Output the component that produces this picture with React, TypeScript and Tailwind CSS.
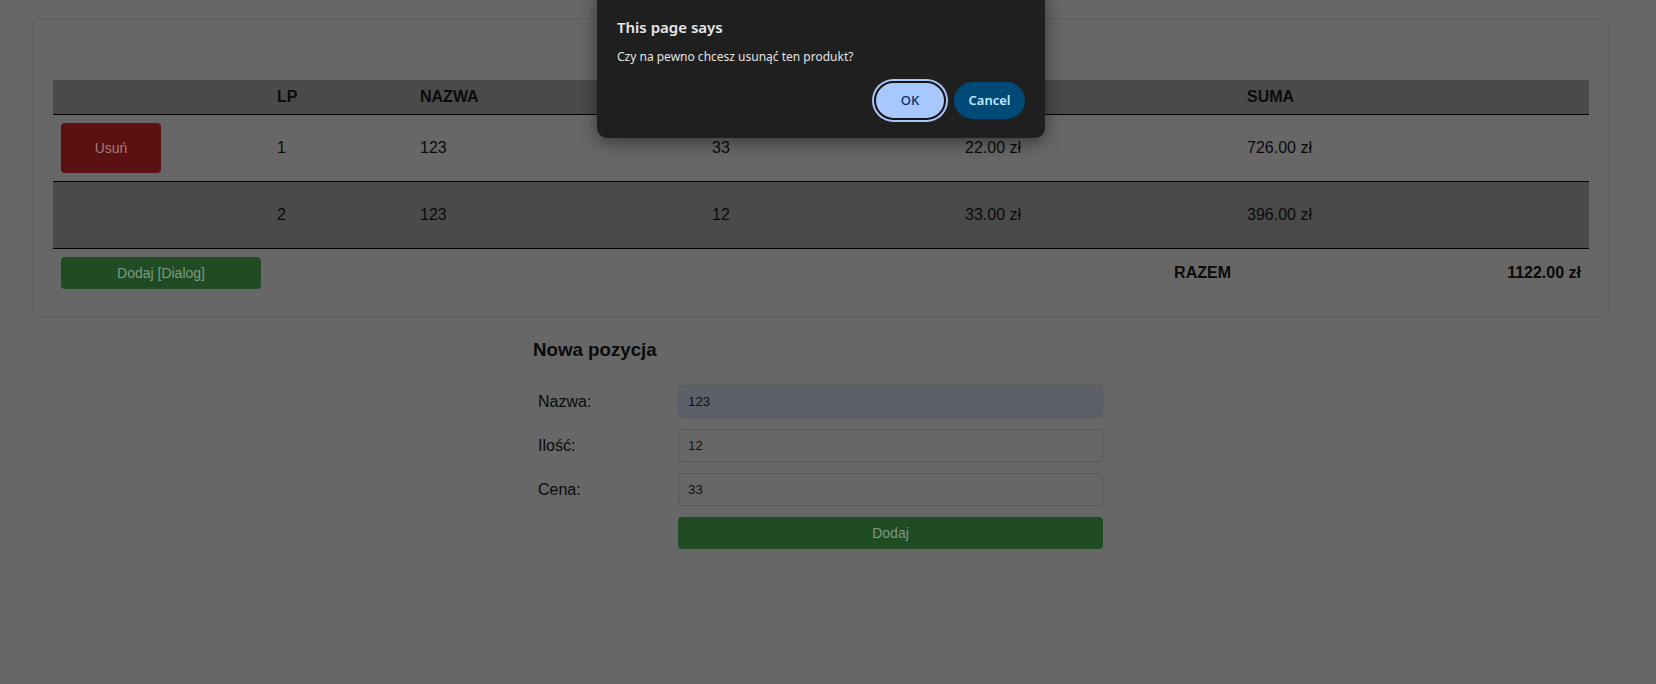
import React from "react";

type Item = {
    lp: number;
    name: string;
    qty: number;
    price: string;
    sum: string;
};

const items: Item[] = [
    { lp: 1, name: "123", qty: 33, price: "22.00 zł", sum: "726.00 zł" },
    { lp: 2, name: "123", qty: 12, price: "33.00 zł", sum: "396.00 zł" },
];

const cols = "grid grid-cols-[216px_143px_292px_253px_282px_350px]";

function ConfirmDialog() {
    return (
        <div className="absolute top-[-12px] left-[597px] w-[448px] h-[150px] rounded-[10px] bg-[#1f1f1f] shadow-[0_4px_18px_rgba(0,0,0,0.45)] px-[20px] pt-[29px] font-['Noto_Sans',sans-serif]">
            <div className="text-[15px] leading-[20px] font-semibold text-[#e8e8e8]">This page says</div>
            <div className="mt-[11px] text-[12px] leading-[18px] text-[#e3e3e3]">
                Czy na pewno chcesz usunąć ten produkt?
            </div>
            <div className="mt-[16px] flex justify-end gap-2">
                <button className="w-[72px] h-[39px] -my-[1px] rounded-full bg-[#a8c7fa] border-2 border-[#141414] shadow-[0_0_0_2px_#a8c7fa] text-[13px] font-medium text-[#062e6f]">
                    OK
                </button>
                <button className="w-[71px] h-[37px] rounded-full bg-[#004a77] text-[13px] font-semibold text-[#c2e7ff]">
                    Cancel
                </button>
            </div>
        </div>
    );
}

export default function App() {
    return (
        <div className="relative min-h-screen w-full overflow-hidden bg-[#676767] pt-[18px] font-['Liberation_Sans',Arial,sans-serif] text-[#0a0a0a]">
            {/* Cart card */}
            <div className="ml-[32px] w-[1577px] rounded-lg border border-[#5d5d5d] px-[20px] pt-[61px] pb-[20px]">
                <div className="w-[1536px]">
                    <div className={`${cols} h-[35px] items-center border-b border-black bg-[#4a4a4a] text-[16px] font-bold`}>
                        <div className="px-2"></div>
                        <div className="px-2">LP</div>
                        <div className="px-2">NAZWA</div>
                        <div className="px-2">ILOŚĆ</div>
                        <div className="px-2">CENA</div>
                        <div className="px-2">SUMA</div>
                    </div>
                    {items.map((it, i) => (
                        <div
                            key={it.lp}
                            className={`${cols} h-[67px] items-center border-b border-black text-[16px] ${i % 2 === 1 ? "bg-[#4a4a4a]" : ""}`}
                        >
                            <div className="px-2">
                                {i === 0 && (
                                    <button className="w-[100px] h-[50px] rounded-[4px] bg-[#5b1111] text-[14px] text-[#a77a7a]">
                                        Usuń
                                    </button>
                                )}
                            </div>
                            <div className="px-2">{it.lp}</div>
                            <div className="px-2">{it.name}</div>
                            <div className="px-2">{it.qty}</div>
                            <div className="px-2">{it.price}</div>
                            <div className="px-2">{it.sum}</div>
                        </div>
                    ))}
                    <div className={`${cols} h-[48px] items-center text-[16px] font-bold`}>
                        <div className="px-2">
                            <button className="w-[200px] h-[32px] rounded-[4px] bg-[#1f4c22] text-[14px] font-normal text-[#7f9a80]">
                                Dodaj [Dialog]
                            </button>
                        </div>
                        <div></div>
                        <div></div>
                        <div></div>
                        <div className="px-2 text-right">RAZEM</div>
                        <div className="px-2 text-right">1122.00 zł</div>
                    </div>
                </div>
            </div>

            {/* New item form */}
            <div className="ml-[533px] mt-[21px] w-[575px]">
                <h3 className="text-[18.72px] leading-[22px] font-bold">Nowa pozycja</h3>
                <div className="mt-[24px] flex flex-col gap-[11px]">
                    {[
                        { label: "Nazwa:", value: "123", autofill: true },
                        { label: "Ilość:", value: "12", autofill: false },
                        { label: "Cena:", value: "33", autofill: false },
                    ].map((f) => (
                        <div key={f.label} className="flex items-center pl-[5px]">
                            <label className="w-[140px] text-[16px]">{f.label}</label>
                            <input
                                readOnly
                                value={f.value}
                                className={`w-[425px] h-[33px] rounded-[4px] border pl-[9px] text-[13.33px] text-[#111] outline-none ${
                                    f.autofill ? "bg-[#5c6069] border-[#565a62]" : "bg-[#676767] border-[#575757]"
                                }`}
                            />
                        </div>
                    ))}
                    <div className="flex pl-[145px]">
                        <button className="w-[425px] h-[32px] rounded-[4px] bg-[#1f4c22] text-[14px] text-[#7f9a80]">
                            Dodaj
                        </button>
                    </div>
                </div>
            </div>

            <ConfirmDialog />
        </div>
    );
}
